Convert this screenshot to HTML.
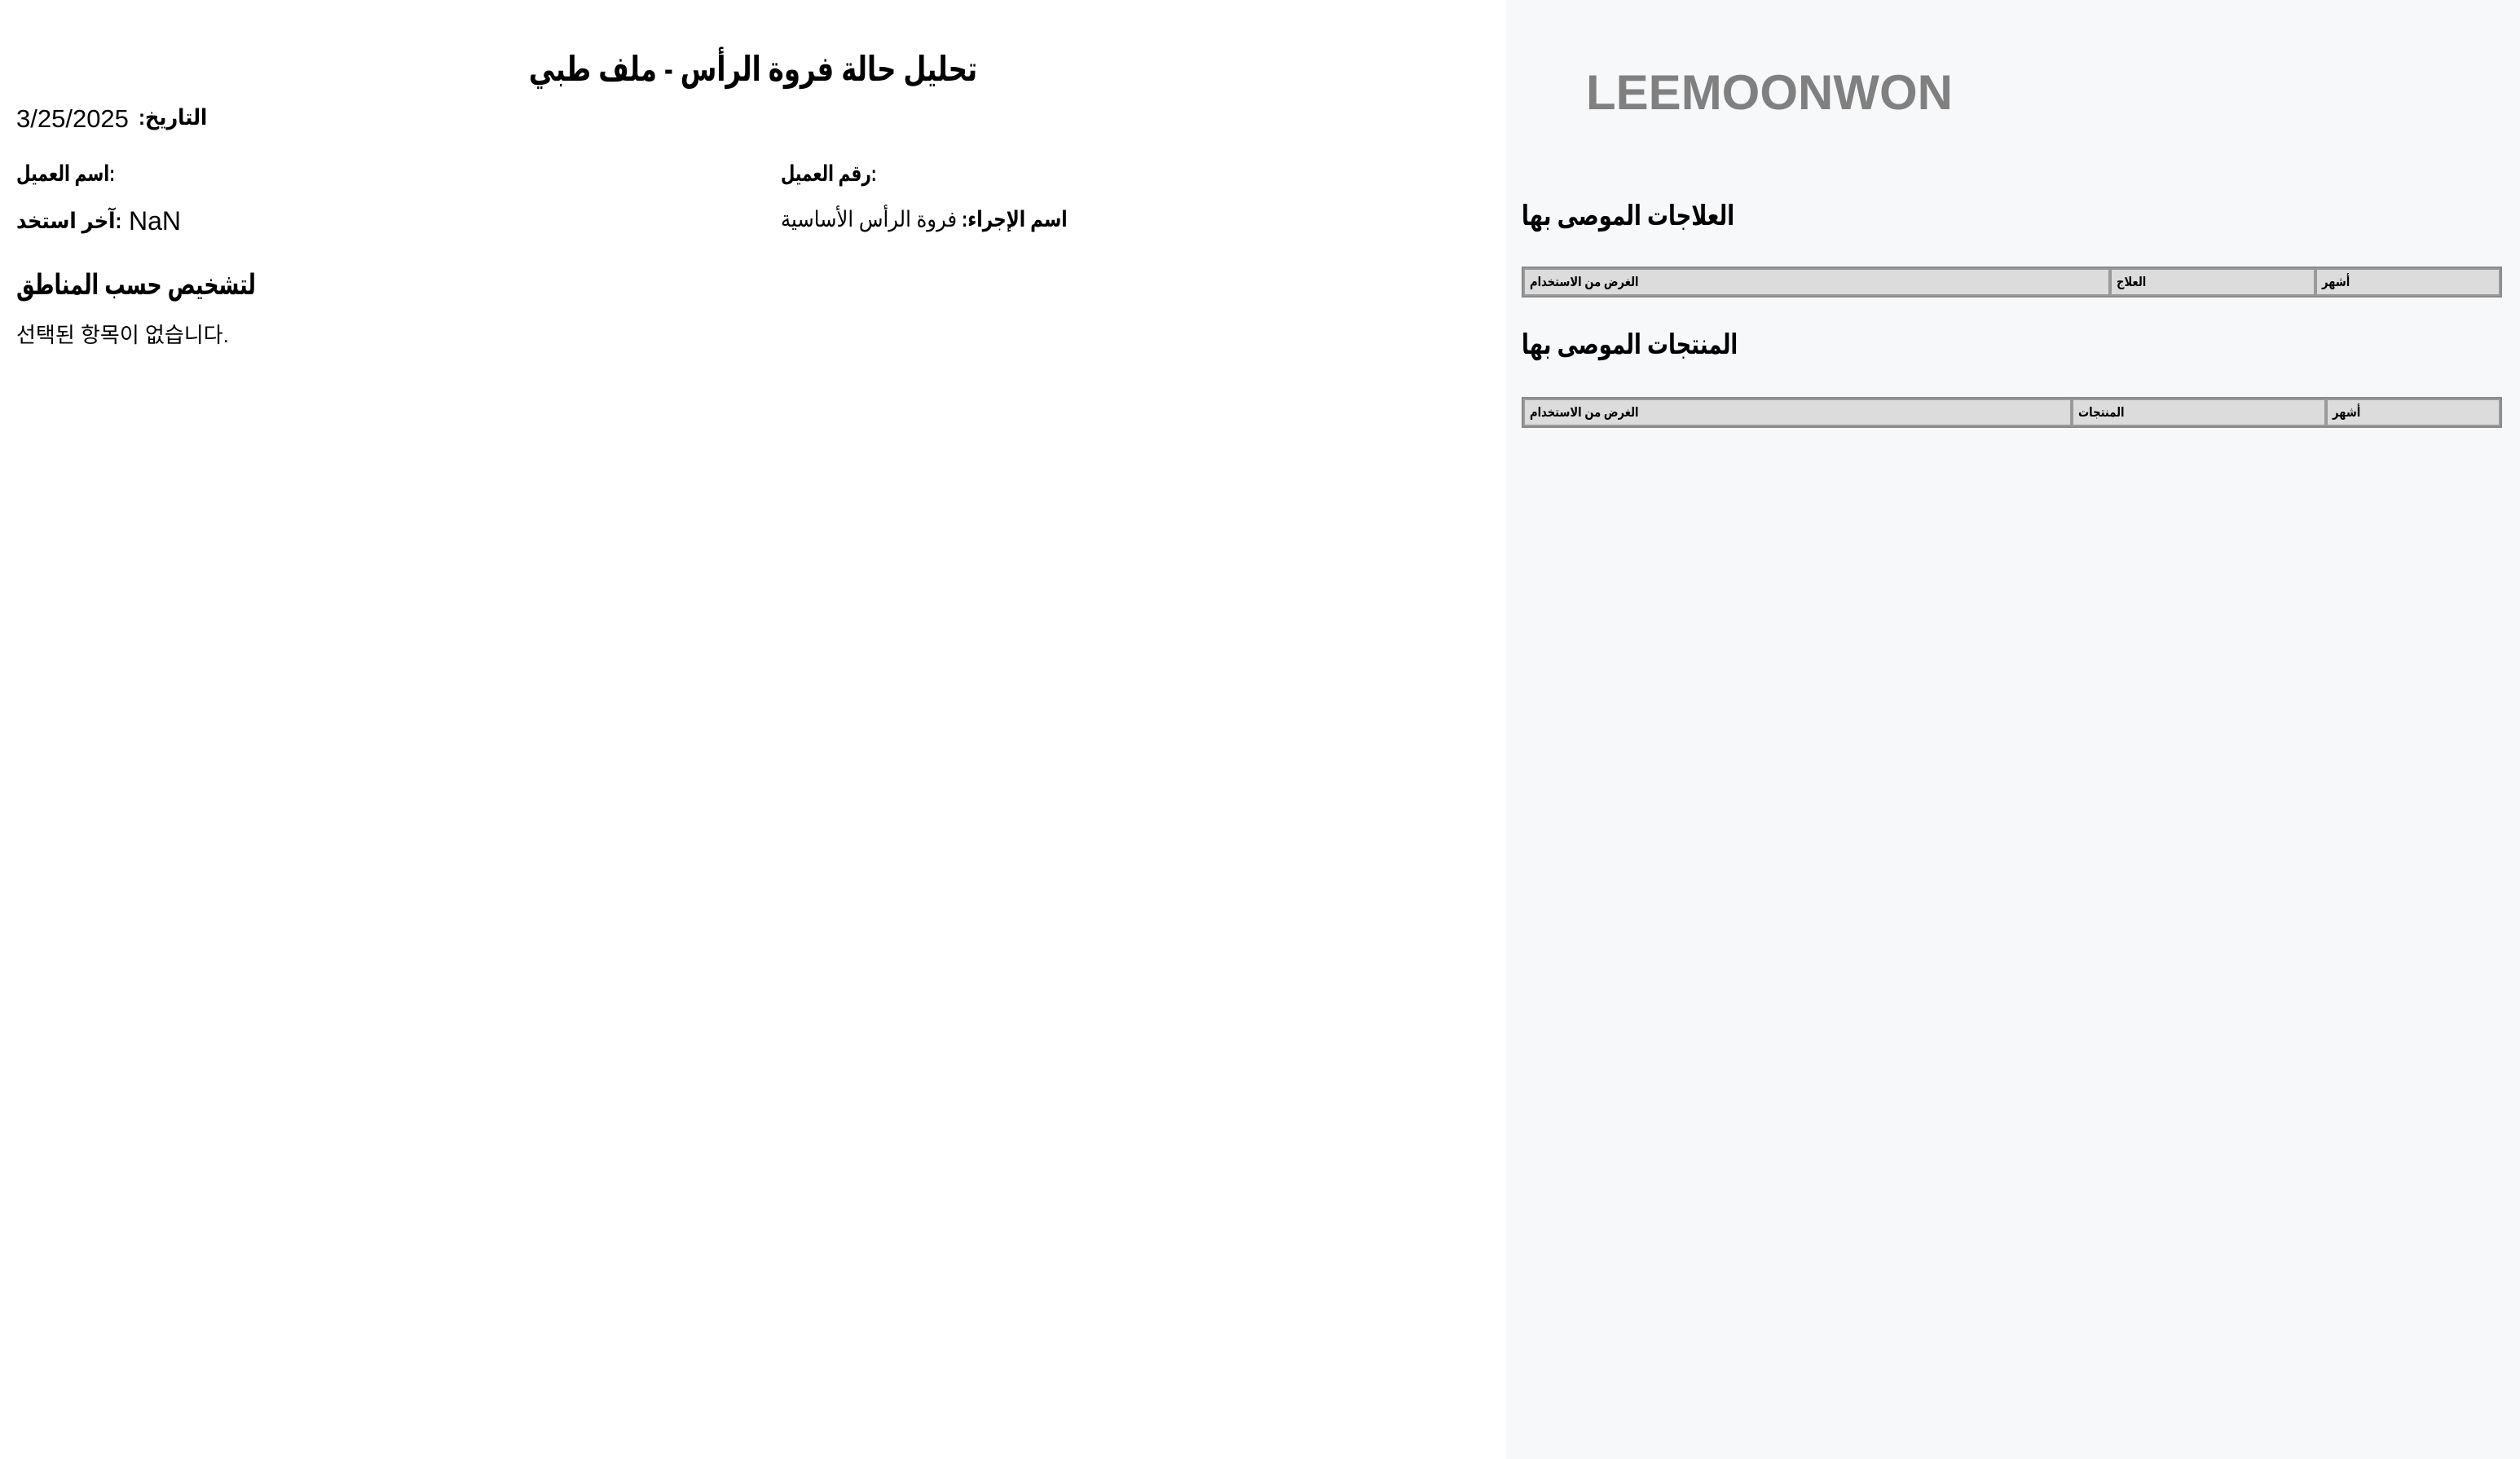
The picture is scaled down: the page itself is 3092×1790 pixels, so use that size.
<!DOCTYPE html>
<html><head><meta charset="utf-8">
<style>
html,body{margin:0;padding:0;}
body{width:3092px;height:1790px;position:relative;overflow:hidden;background:#fff;font-family:"Liberation Sans","DejaVu Sans","Noto Sans CJK KR",sans-serif;color:#000;}
.left{position:absolute;left:0;top:0;width:1848px;height:1790px;background:#fff;}
.right{position:absolute;left:1848px;top:0;width:1244px;height:1790px;background:#f7f8fa;}
.a{position:absolute;white-space:nowrap;line-height:1;transform-origin:left center;}
table{position:absolute;border-collapse:separate;border-spacing:0;border:2px solid #8a8a8a;background:#dcdcdc;}
td{border:2px solid #9a9a9a;height:30px;padding:0 6px;font-size:16px;font-weight:bold;text-align:left;vertical-align:middle;}
td span{display:inline-block;transform:scaleX(.82);transform-origin:left center;}
</style></head><body>
<div class="left">
  <div class="a" style="left:0;width:1848px;text-align:center;top:64px;font-size:42px;font-weight:bold;transform:scaleX(.77);transform-origin:center center;">تحليل حالة فروة الرأس - ملف طبي</div>
  <div class="a" style="left:20px;top:130px;font-size:31px;">3/25/2025</div>
  <div class="a" dir="rtl" style="left:170px;top:131px;font-size:27px;font-weight:bold;transform:scaleX(.89);">التاريخ:</div>
  <div class="a" style="left:20px;top:200px;font-size:27px;font-weight:bold;transform:scaleX(.75);">اسم العميل:</div>
  <div class="a" style="left:958px;top:200px;font-size:27px;font-weight:bold;transform:scaleX(.74);">رقم العميل:</div>
  <div class="a" style="left:20px;top:258px;font-size:27px;font-weight:bold;transform:scaleX(.9);">آخر استخد:</div>
  <div class="a" style="left:158px;top:255px;font-size:32px;">NaN</div>
  <div class="a" style="left:958px;top:256px;font-size:27px;transform:scaleX(.9);">فروة الرأس الأساسية</div>
  <div class="a" dir="rtl" style="left:1180px;top:256px;font-size:27px;font-weight:bold;transform:scaleX(.8);">اسم الإجراء:</div>
  <div class="a" style="left:20px;top:332px;font-size:35px;font-weight:bold;transform:scaleX(.72);">لتشخيص حسب المناطق</div>
  <div class="a" style="left:20px;top:398px;font-size:26px;">선택된 항목이 없습니다.</div>
</div>
<div class="right">
  <div class="a" style="left:98px;top:84px;font-size:60px;font-weight:bold;color:#808080;">LEEMOONWON</div>
  <div class="a" style="left:19px;top:248px;font-size:34px;font-weight:bold;transform:scaleX(.76);">العلاجات الموصى بها</div>
  <table style="left:19px;top:327px;width:1203px;">
    <tr><td style="width:704px"><span>الغرض من الاستخدام</span></td><td style="width:236px"><span>العلاج</span></td><td><span>أشهر</span></td></tr>
  </table>
  <div class="a" style="left:19px;top:406px;font-size:34px;font-weight:bold;transform:scaleX(.76);">المنتجات الموصى بها</div>
  <table style="left:19px;top:487px;width:1203px;">
    <tr><td style="width:657px"><span>الغرض من الاستخدام</span></td><td style="width:296px"><span>المنتجات</span></td><td><span>أشهر</span></td></tr>
  </table>
</div>
</body></html>
